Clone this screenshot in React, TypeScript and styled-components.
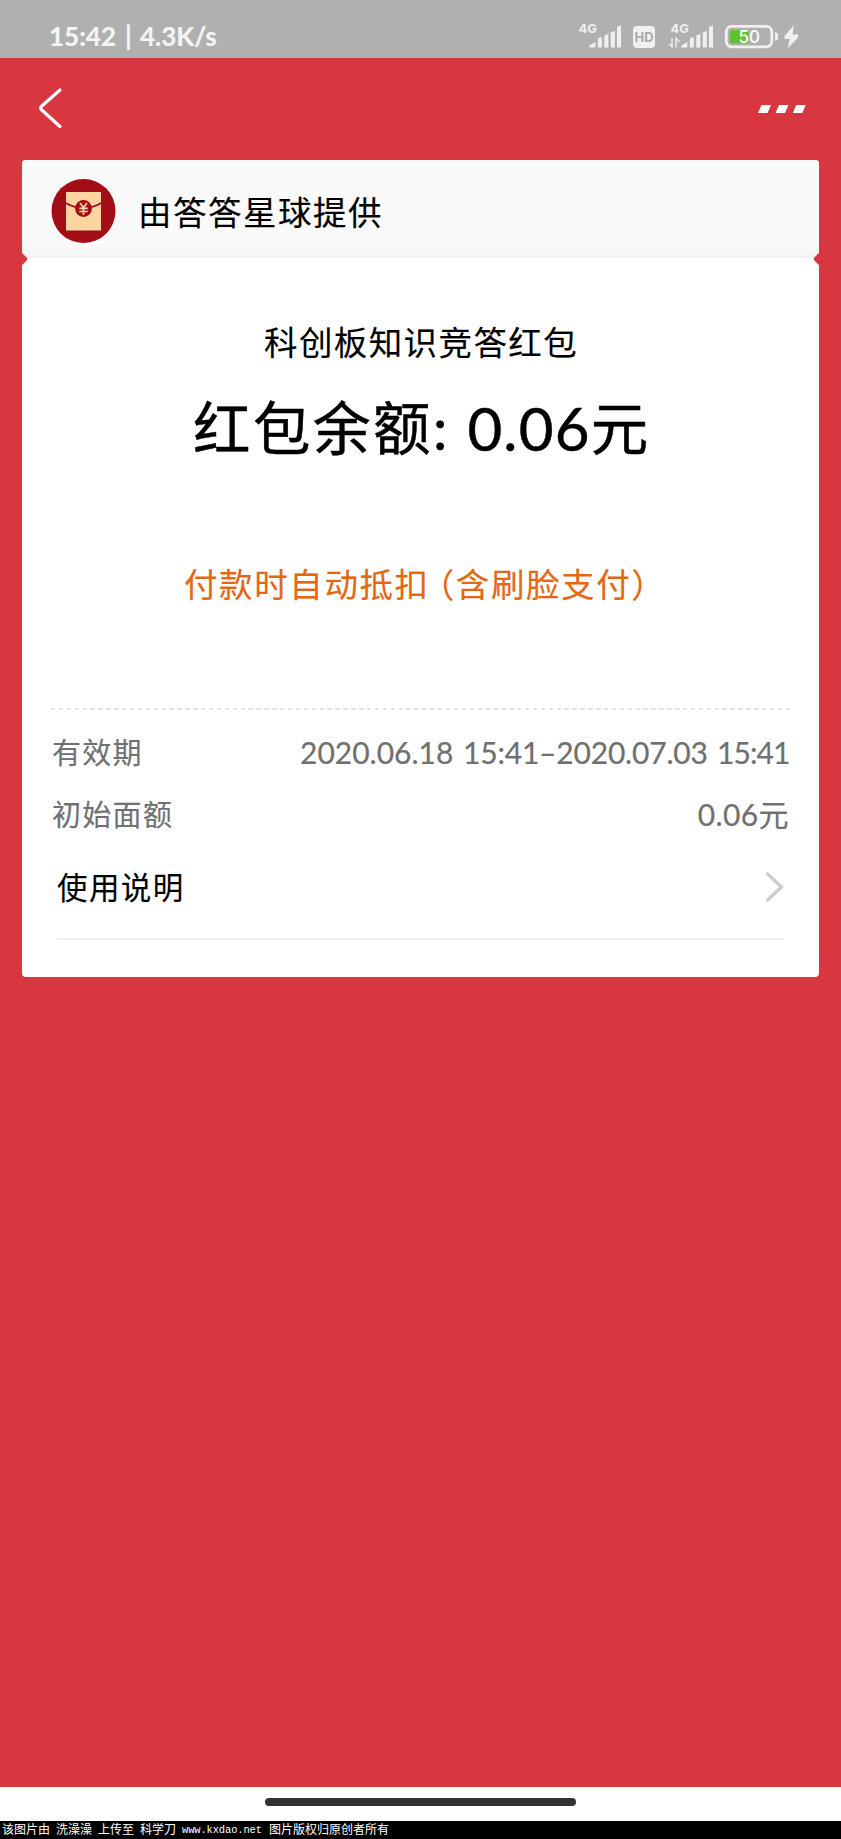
import React from 'react';
import styled, { createGlobalStyle } from 'styled-components';

const GlobalStyle = createGlobalStyle`
  * { box-sizing: border-box; }
  body { margin: 0; background: #000; }
`;

const Screen = styled.div`
  width: 841px;
  height: 1839px;
  display: flex;
  flex-direction: column;
  overflow: hidden;
  background: #d93740;
  font-family: Lato, "Noto Sans CJK SC", sans-serif;
  white-space: nowrap;
  color: #000;
`;

const StatusBar = styled.header`
  height: 58px;
  flex: none;
  display: flex;
  justify-content: space-between;
  padding: 0 40px 0 49px;
  background: #b0b0b0;
  color: #f5f5f5;
`;

const Clock = styled.div`
  display: flex;
  padding-top: 20px;
  font-size: 26px;
  line-height: 32px;
  font-weight: 700;
  -webkit-text-stroke: 0.2px currentColor;
`;

const ClockPart = styled.span<{ $width: number }>`
  width: ${p => p.$width}px;
`;

const NavBar = styled.nav`
  height: 102px;
  flex: none;
  display: flex;
  justify-content: space-between;
  align-items: flex-start;
  padding: 28px 34px 0 36px;
`;

const Card = styled.main`
  position: relative;
  margin: 0 22px;
  height: 817px;
  flex: none;
  display: flex;
  flex-direction: column;
  border-radius: 4px;
  overflow: hidden;
  background: #fff;
`;

const Notch = styled.i<{ $side: 'left' | 'right' }>`
  position: absolute;
  top: 93.5px;
  ${p => p.$side}: -6px;
  width: 10px;
  height: 10px;
  border-radius: 2px;
  transform: rotate(45deg);
  background: #d93740;
`;

const Provider = styled.header`
  height: 98px;
  flex: none;
  display: flex;
  align-items: flex-start;
  padding: 19px 0 0 29px;
  background: linear-gradient(#fafafa 0, #fafafa 84px, #f3f3f3 98px);
`;

const ProviderName = styled.span`
  margin: 9px 0 0 22px;
  font-size: 33.5px;
  line-height: 48px;
  letter-spacing: 1.5px;
  -webkit-text-stroke: 0.15px currentColor;
`;

const Line = styled.div<{ $top: number; $left: number; $size: number; $height: number; $spacing: number; $color?: string; $stroke?: number }>`
  display: flex;
  margin: ${p => p.$top}px 0 0 ${p => p.$left}px;
  font-size: ${p => p.$size}px;
  line-height: ${p => p.$height}px;
  height: ${p => p.$height}px;
  letter-spacing: ${p => p.$spacing}px;
  color: ${p => p.$color ?? '#000'};
  -webkit-text-stroke: ${p => p.$stroke ?? 0.15}px currentColor;
`;

const Amount = styled.span<{ $left: number; $size: number; $spacing: number }>`
  margin-left: ${p => p.$left}px;
  font-size: ${p => p.$size}px;
  letter-spacing: ${p => p.$spacing}px;
`;

const Bracketed = styled.span`
  margin-left: -9px;
`;

const Divider = styled.hr`
  width: 738.5px;
  height: 2px;
  flex: none;
  margin: 100px 0 0 29px;
  border: 0;
  background: repeating-linear-gradient(90deg, #e4e4e4 0 4.4px, transparent 4.4px 7.9px);
`;

const Row = styled.div<{ $top: number }>`
  display: flex;
  justify-content: space-between;
  margin: ${p => p.$top}px 30px 0 30px;
  height: 44px;
  line-height: 44px;
  font-size: 29px;
  letter-spacing: 1.3px;
  color: #707070;
  -webkit-text-stroke: 0.15px currentColor;
`;

const Value = styled.span`
  display: flex;
  height: 42px;
  line-height: 42px;
  font-size: 30px;
  letter-spacing: 0.4px;
  -webkit-text-stroke: 0.2px currentColor;
`;

const Word = styled.span<{ $width: number; $spacing: number }>`
  width: ${p => p.$width}px;
  letter-spacing: ${p => p.$spacing}px;
`;

const HelpRow = styled.div`
  display: flex;
  justify-content: space-between;
  align-items: center;
  width: 727px;
  height: 76px;
  margin: 27px 0 0 35px;
  padding-bottom: 28px;
  border-bottom: 2px solid #f0f0f0;
  font-size: 30.5px;
  letter-spacing: 1.4px;
  -webkit-text-stroke: 0.15px currentColor;
`;

const HelpLabel = styled.span`
  padding-bottom: 3px;
`;

const HomeArea = styled.div`
  height: 34px;
  flex: none;
  margin-top: auto;
  padding-top: 10.5px;
  background: #fff;
`;

const HomePill = styled.div`
  width: 311px;
  height: 8px;
  margin-left: 265px;
  border-radius: 4px;
  background: #333;
`;

const Credit = styled.footer`
  display: flex;
  gap: 6px;
  height: 18px;
  flex: none;
  padding-left: 2px;
  background: #000;
  color: #fff;
  font-size: 12px;
  line-height: 18px;
`;

const Site = styled.span`
  font-family: "Liberation Mono", monospace;
  font-size: 10.4px;
  width: 81px;
  letter-spacing: -0.1px;
`;

const Bars = ({ x }: { x: number }) => (
  <g transform={`translate(${x} 0)`}>
    <path d="M0 47.5v-1q0-1 1-1.6l5-3v5.6z" />
    <path d="M8.5 47.5v-9l4-1.7v10.7z" />
    <path d="M15 47.5v-12l4-1.7v13.7z" />
    <path d="M21.5 47.5v-15l4-1.7v16.7z" />
    <path d="M27.7 47.5V27l4-1.7v22.2z" />
  </g>
);

const StatusIcons = () => (
  <svg width="222" height="58" viewBox="579 0 222 58" fill="#f0f0f0" fontFamily="Inter, sans-serif" fontWeight="700">
    <text x="578.5" y="32.5" fontSize="12.3" textLength="18.3" lengthAdjust="spacingAndGlyphs">4G</text>
    <Bars x={589.3} />
    <rect x="633" y="26" width="22" height="22" rx="4" />
    <text x="634.6" y="42" fontSize="13.5" textLength="19" lengthAdjust="spacingAndGlyphs" fill="#aaa">HD</text>
    <text x="670.5" y="32.5" fontSize="12.3" textLength="18.3" lengthAdjust="spacingAndGlyphs">4G</text>
    <g fill="none" stroke="#eee" strokeWidth="1.4">
      <path d="M672 38v9.5M672.5 47.5l-3.4-3.6M676 47.5V38.5l3.6 3.6" />
    </g>
    <Bars x={681.3} />
    <rect x="726.3" y="26.3" width="45.5" height="20.5" rx="5.5" fill="none" stroke="#f0f0f0" strokeWidth="2.8" />
    <path d="M732 30h16.5v13.5H732q-2 0-2-2v-9.5q0-2 2-2z" fill="#60c22c" />
    <text x="738.5" y="43.3" fontSize="17.3" textLength="21.5" lengthAdjust="spacingAndGlyphs" fontWeight="500" fill="#fff">50</text>
    <path d="M775 32.5q3 0 3 2v4q0 2-3 2z" />
    <path d="M794 25L784.5 36v3h5.2l-2 9.5L798 37.5v-3h-5.5z" />
  </svg>
);

const BackIcon = () => (
  <svg width="28" height="44" viewBox="36 86 28 44" fill="none" stroke="#fff" strokeWidth="3.2" strokeLinecap="round" strokeLinejoin="round">
    <path d="M60 90L41.5 106.3Q40 108 41.5 109.7L60 126.5" />
  </svg>
);

const MoreIcon = () => (
  <svg width="50" height="44" viewBox="757 86 50 44" fill="#fff">
    <path d="M761.5 105h9.5l-3.5 8h-9.5zM779 105h9.5l-3.5 8h-9.5zM796.3 105h9.5l-3.5 8h-9.5z" />
  </svg>
);

const PacketLogo = () => (
  <svg width="65" height="65" viewBox="0 0 65 65">
    <circle cx="32.5" cy="32" r="32" fill="#a30d16" />
    <path d="M15 13h35v38.5H15z" fill="#fed5a1" />
    <path d="M15 24q5 3.5 17.5 6Q45 27.5 50 24" fill="none" stroke="#a30d16" strokeWidth="2" />
    <circle cx="32.5" cy="29.5" r="8.4" fill="#a30d16" />
    <path d="M29 24l3.5 4.5 3.5-4.5M32.5 28.5V36M28.3 29.3h8.4M28.3 32.5h8.4" fill="none" stroke="#fed5a1" strokeWidth="1.7" />
  </svg>
);

const Chevron = () => (
  <svg width="20" height="32" viewBox="0 0 20 32" fill="none" stroke="#ccc" strokeWidth="3.2">
    <path d="M2.5 2l15 14-15 14" />
  </svg>
);

export default function App() {
  return (
    <Screen>
      <GlobalStyle />
      <StatusBar>
        <Clock>
          <ClockPart $width={76}>15:42</ClockPart>
          <ClockPart $width={15}>|</ClockPart>
          <ClockPart $width={80}>4.3K/s</ClockPart>
        </Clock>
        <StatusIcons />
      </StatusBar>
      <NavBar>
        <BackIcon />
        <MoreIcon />
      </NavBar>
      <Card>
        <Provider>
          <PacketLogo />
          <ProviderName>由答答星球提供</ProviderName>
        </Provider>
        <Line $top={60} $left={242} $size={33.5} $height={48} $spacing={1.4}>科创板知识竞答红包</Line>
        <Line $top={22} $left={171} $size={57.5} $height={80} $spacing={2.5} $stroke={0.5}>
          红包余额:
          <Amount $left={17.5} $size={60} $spacing={1.2}>0.06</Amount>元
        </Line>
        <Line $top={92} $left={162} $size={33.5} $height={48} $spacing={1.6} $color="#e46713">
          付款时自动抵扣<Bracketed>（含刷脸支付）</Bracketed>
        </Line>
        <Divider />
        <Row $top={21}>
          <span>有效期</span>
          <Value>
            <Word $width={163} $spacing={0}>2020.06.18</Word>
            <Word $width={254} $spacing={-0.2}>15:41–2020.07.03</Word>
            <Word $width={72} $spacing={-0.9}>15:41</Word>
          </Value>
        </Row>
        <Row $top={18}>
          <span>初始面额</span>
          <Value>0.06元</Value>
        </Row>
        <HelpRow>
          <HelpLabel>使用说明</HelpLabel>
          <Chevron />
        </HelpRow>
        <Notch $side="left" />
        <Notch $side="right" />
      </Card>
      <HomeArea>
        <HomePill />
      </HomeArea>
      <Credit>
        <span>该图片由</span>
        <span>洗澡澡</span>
        <span>上传至</span>
        <span>科学刀</span>
        <Site>www.kxdao.net</Site>
        <span>图片版权归原创者所有</span>
      </Credit>
    </Screen>
  );
}
